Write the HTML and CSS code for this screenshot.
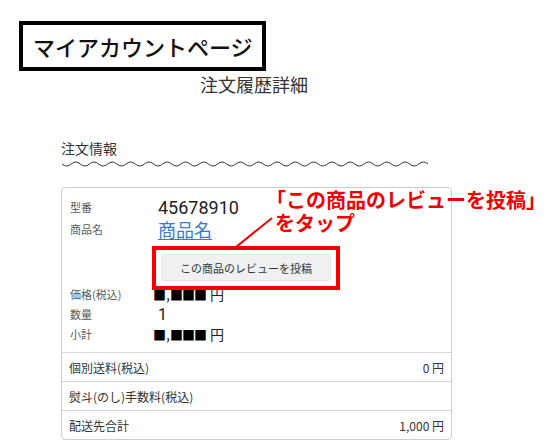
FILE: index.html
```html
<!DOCTYPE html>
<html lang="ja">
<head>
<meta charset="utf-8">
<title>注文履歴詳細</title>
<link rel="stylesheet" href="styles.css">
</head>
<body>
<div class="page">
  <h1 class="account">マイアカウントページ</h1>
  <h2 class="title">注文履歴詳細</h2>
  <section class="order">
    <h3 class="order-head">注文情報</h3>
    <svg class="wave" width="366" height="8" viewBox="0 0 366 8">
      <path d="M0,4 Q4.575,8 9.15,4 T18.3,4 T27.45,4 T36.6,4 T45.75,4 T54.9,4 T64.05,4 T73.2,4 T82.35,4 T91.5,4 T100.65,4 T109.8,4 T118.95,4 T128.1,4 T137.25,4 T146.4,4 T155.55,4 T164.7,4 T173.85,4 T183,4 T192.15,4 T201.3,4 T210.45,4 T219.6,4 T228.75,4 T237.9,4 T247.05,4 T256.2,4 T265.35,4 T274.5,4 T283.65,4 T292.8,4 T301.95,4 T311.1,4 T320.25,4 T329.4,4 T338.55,4 T347.7,4 T356.85,4 T366,4" fill="none" stroke="#333" stroke-width="1"/>
    </svg>
    <div class="card">
      <div class="item">
        <div class="line big"><span class="label">型番</span><span class="value">45678910</span></div>
        <div class="line big"><span class="label">商品名</span><a class="value link" href="#">商品名</a></div>
        <div class="review">
          <button class="review-btn" type="button">この商品のレビューを投稿</button>
          <div class="highlight"></div>
        </div>
        <div class="prices">
          <div class="line"><span class="label">価格(税込)</span><span class="value masked"><span class="sq">■</span>,<span class="sq">■■■</span> 円</span></div>
          <div class="line"><span class="label">数量</span><span class="value qty">1</span></div>
          <div class="line"><span class="label">小計</span><span class="value masked"><span class="sq">■</span>,<span class="sq">■■■</span> 円</span></div>
        </div>
      </div>
      <div class="sum-row"><span>個別送料(税込)</span><span>0 円</span></div>
      <div class="sum-row"><span>熨斗(のし)手数料(税込)</span><span></span></div>
      <div class="sum-row"><span>配送先合計</span><span>1,000 円</span></div>
    </div>
  </section>

  <div class="note">
    <div class="note-l1">「この商品のレビューを投稿」</div>
    <div class="note-l2">をタップ</div>
  </div>
  <svg class="pointer" width="50" height="40" viewBox="0 0 50 40">
    <line x1="6" y1="35" x2="42" y2="6" stroke="#f00000" stroke-width="2"/>
  </svg>
</div>
</body>
</html>
```

FILE: styles.css
```css
* { box-sizing: border-box; }
html, body { margin: 0; padding: 0; background: #fff; }
body {
  font-family: Roboto, "Noto Sans CJK JP", sans-serif;
  color: #333;
}
.page {
  position: relative;
  width: 550px;
  height: 440px;
  overflow: hidden;
}
.account {
  display: inline-block;
  margin: 21px 0 0 19px;
  border: 4px solid #000;
  padding: 0 9px 0 10px;
  width: 247px;
  font-family: "Noto Sans CJK JP", sans-serif;
  font-size: 22px;
  line-height: 42px;
  font-weight: 500;
  color: #111;
  white-space: nowrap;
}
.title {
  margin: 1px 0 0 200px;
  font-family: "Noto Sans CJK JP", sans-serif;
  font-size: 18px;
  line-height: 24px;
  font-weight: 400;
  color: #333;
}
.order {
  margin-left: 61px;
  width: 391px;
}
.order-head {
  margin: 42px 0 0;
  font-family: "Noto Sans CJK JP", sans-serif;
  font-size: 14px;
  line-height: 20px;
  font-weight: 400;
  color: #333;
}
.wave {
  display: block;
  margin: 2px 0 0 1px;
}
.card {
  margin-top: 19px;
  border: 1px solid #c8ced4;
  border-radius: 4px;
}
.item {
  padding: 8px 8px 8px;
}
.line {
  display: flex;
  align-items: center;
  height: 20px;
}
.line.big { height: 22px; }
.label {
  width: 88px;
  flex: none;
  font-family: "Noto Sans CJK JP", sans-serif;
  font-size: 11px;
  color: #5a5a5a;
}
.value {
  font-size: 18px;
  color: #222;
}
.link {
  font-family: "Noto Sans CJK JP", sans-serif;
  color: #3a7bc8;
  text-decoration: underline;
  text-underline-offset: 2px;
  text-decoration-thickness: 1px;
}
.review {
  position: relative;
  margin: 14px 0 0 91px;
  width: 170px;
}
.review-btn {
  display: block;
  width: 170px;
  height: 27px;
  padding: 0;
  border: 1px solid #e3e6e9;
  border-radius: 3px;
  background: #eef0f2;
  font-family: "Noto Sans CJK JP", sans-serif;
  font-size: 11px;
  color: #333;
}
.highlight {
  position: absolute;
  left: -9px;
  top: -8px;
  width: 188px;
  height: 44px;
  border: 4px solid #f00000;
}
.prices { margin-top: 3px; }
.masked {
  margin-left: -5px;
  font-size: 14px;
  font-family: "Noto Sans CJK JP", sans-serif;
  color: #222;
}
.sq {
  font-family: "Noto Sans CJK JP", sans-serif;
  font-size: 13px;
  letter-spacing: -1px;
  margin-right: 1px;
  color: #000;
}
.qty { font-size: 16px; }
.sum-row {
  display: flex;
  justify-content: space-between;
  align-items: center;
  height: 29px;
  padding: 0 7px;
  border-top: 1px solid #d3d8dd;
  font-family: "Noto Sans CJK JP", sans-serif;
  font-size: 12px;
  color: #333;
}
.note {
  position: absolute;
  left: 266px;
  top: 188px;
  font-family: "Noto Sans CJK JP", sans-serif;
  font-size: 20px;
  line-height: 23px;
  font-weight: 700;
  color: #f00000;
  white-space: nowrap;
}
.note-l2 { margin-left: 9px; }
.pointer {
  position: absolute;
  left: 230px;
  top: 212px;
}
```
